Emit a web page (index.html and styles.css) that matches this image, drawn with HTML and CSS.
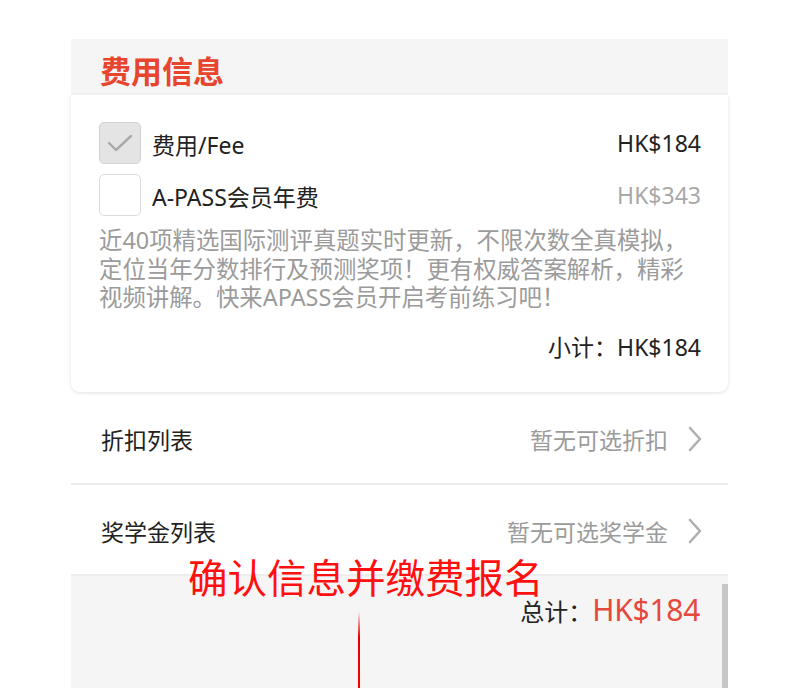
FILE: index.html
```html
<!DOCTYPE html>
<html lang="zh-CN">
<head>
<meta charset="utf-8">
<link rel="stylesheet" href="styles.css">
</head>
<body>
<div class="page">
  <div class="head"><h1 class="title">费用信息</h1></div>
  <div class="card">
    <div class="item">
      <span class="box box-on">
        <svg width="26" height="20" viewBox="0 0 26 20"><polyline points="2,10 9,17 24,3" fill="none" stroke="#a9a9a9" stroke-width="2.4" stroke-linecap="round" stroke-linejoin="round"/></svg>
      </span>
      <span class="item-name">费用/Fee</span>
      <span class="item-price">HK$184</span>
    </div>
    <div class="item">
      <span class="box"></span>
      <span class="item-name">A-PASS会员年费</span>
      <span class="item-price muted">HK$343</span>
    </div>
    <div class="desc">
      <span class="desc-line">近40项精选国际测评真题实时更新，不限次数全真模拟，</span>
      <span class="desc-line">定位当年分数排行及预测奖项！更有权威答案解析，精彩</span>
      <span class="desc-line">视频讲解。快来APASS会员开启考前练习吧！</span>
    </div>
    <div class="subtotal">小计：HK$184</div>
  </div>
  <div class="row row-first">
    <span class="row-label">折扣列表</span>
    <span class="row-value">暂无可选折扣</span>
    <svg class="chev" width="16" height="26" viewBox="0 0 16 26"><polyline points="3,2 13,13 3,24" fill="none" stroke="#b0b0b0" stroke-width="2.6" stroke-linecap="round" stroke-linejoin="round"/></svg>
  </div>
  <div class="row">
    <span class="row-label">奖学金列表</span>
    <span class="row-value">暂无可选奖学金</span>
    <svg class="chev" width="16" height="26" viewBox="0 0 16 26"><polyline points="3,2 13,13 3,24" fill="none" stroke="#b0b0b0" stroke-width="2.6" stroke-linecap="round" stroke-linejoin="round"/></svg>
  </div>
  <div class="foot">
    <div class="total"><span class="total-label">总计：</span><span class="total-num">HK$184</span></div>
    <div class="scrollbar"></div>
    <div class="annot-line"></div>
  </div>
  <div class="annot">确认信息并缴费报名</div>
</div>
</body>
</html>
```
FILE: styles.css
```css
html, body {
  margin: 0;
  padding: 0;
  background: #ffffff;
  height: 688px;
  overflow: hidden;
}
body {
  font-family: "Noto Sans", "Noto Sans CJK SC", sans-serif;
  color: #222222;
}
.page {
  position: relative;
  margin: 39px 0 0 71px;
  width: 657px;
}
.head {
  background: #f5f5f5;
  height: 56px;
  padding-left: 29px;
  display: flex;
  align-items: center;
}
.title {
  margin: 4px 0 0 0;
  font-size: 31px;
  font-weight: 700;
  color: #e8452f;
  line-height: 1;
  font-family: "Noto Sans CJK SC", sans-serif;
}
.card {
  background: #ffffff;
  border-radius: 0 0 9px 9px;
  box-shadow: 0 1px 4px rgba(0, 0, 0, 0.12);
  padding: 27px 27px 30px 28px;
  display: flex;
  flex-direction: column;
}
.item {
  display: flex;
  align-items: center;
  height: 42px;
  font-size: 23px;
  margin-bottom: 10px;
}
.box {
  width: 40px;
  height: 40px;
  border: 1px solid #dcdcdc;
  border-radius: 5px;
  background: #ffffff;
  display: flex;
  align-items: center;
  justify-content: center;
  margin-right: 11px;
  flex: none;
}
.box-on {
  background: #e4e4e4;
  border-color: #d2d2d2;
}
.item-name {
  flex: 1;
  color: #222222;
  padding-top: 2px;
}
.item-price {
  color: #222222;
}
.muted {
  color: #a8a8a8;
}
.desc {
  display: flex;
  flex-direction: column;
  font-size: 23.4px;
  color: #9b9b9b;
  white-space: nowrap;
}
.desc-line {
  display: block;
  height: 28.6px;
  line-height: 28.6px;
}
.subtotal {
  margin-top: 21px;
  text-align: right;
  font-size: 23px;
  line-height: 29px;
  color: #222222;
}
.row {
  box-sizing: border-box;
  height: 91px;
  border-bottom: 2px solid #ededed;
  display: flex;
  align-items: center;
  padding: 3px 25px 0 30px;
  font-size: 23px;
}
.row-first {
  height: 93px;
}
.row-label {
  flex: 1;
  color: #222222;
}
.row-value {
  color: #9b9b9b;
  margin-right: 19px;
}
.chev {
  display: block;
}
.foot {
  position: relative;
  background: #f5f5f5;
  height: 120px;
  padding: 16px 28px 0 0;
  box-sizing: border-box;
}
.total {
  display: flex;
  justify-content: flex-end;
  align-items: baseline;
}
.total-label {
  font-size: 24px;
  color: #222222;
}
.total-num {
  font-size: 30px;
  color: #e4493b;
  line-height: 36px;
  letter-spacing: -0.3px;
}
.scrollbar {
  position: absolute;
  right: 0;
  top: 8px;
  bottom: 0;
  width: 6px;
  background: #c6c6c6;
}
.annot-line {
  position: absolute;
  left: 287px;
  top: 36px;
  bottom: 0;
  width: 2px;
  background: linear-gradient(#f5f5f5, #e60000 30%, #ff0000);
}
.annot {
  position: absolute;
  left: 117px;
  top: 512px;
  font-family: "Noto Sans CJK SC", sans-serif;
  font-size: 39.5px;
  line-height: 50px;
  color: #ff1010;
  font-weight: 400;
  white-space: nowrap;
}
```
